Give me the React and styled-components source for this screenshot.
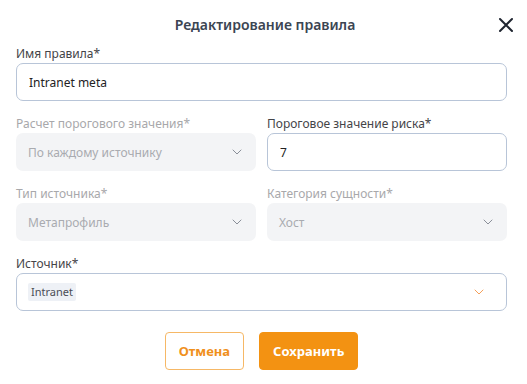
import React from "react";
import styled, { createGlobalStyle } from "styled-components";

const GlobalStyle = createGlobalStyle`
    body {
        margin: 0;
        background: #ffffff;
        font-family: "Noto Sans", "Open Sans", sans-serif;
    }
`;

const ChevronIcon = ({ color = "#8a8f99" }) => (
    <svg width="10" height="6" viewBox="0 0 10 6" fill="none">
        <path d="M1 1l4 4 4-4" stroke={color} strokeWidth="1" strokeLinecap="round" strokeLinejoin="round" />
    </svg>
);

const CloseIcon = () => (
    <svg width="16" height="16" viewBox="0 0 16 16" fill="none">
        <path d="M2 2l12 12M14 2L2 14" stroke="#1f2530" strokeWidth="2" strokeLinecap="round" />
    </svg>
);

const Field = ({ label, disabled, children }) => (
    <StyledField>
        <Label $disabled={disabled}>{label}</Label>
        {children}
    </StyledField>
);

const Select = ({ value, disabled, chevron }) => (
    <SelectBox $disabled={disabled}>
        {value}
        <ChevronIcon color={chevron} />
    </SelectBox>
);

const App = () => {
    return (
        <>
            <GlobalStyle />
            <StyledModal>
                <Header>
                    <span />
                    <Title>Редактирование правила</Title>
                    <CloseButton>
                        <CloseIcon />
                    </CloseButton>
                </Header>

                <Form>
                    <Field label="Имя правила*">
                        <Input defaultValue="Intranet meta" />
                    </Field>

                    <Row>
                        <Field label="Расчет порогового значения*" disabled>
                            <Select value="По каждому источнику" disabled />
                        </Field>
                        <Field label="Пороговое значение риска*">
                            <Input defaultValue="7" />
                        </Field>
                    </Row>

                    <Row>
                        <Field label="Тип источника*" disabled>
                            <Select value="Метапрофиль" disabled />
                        </Field>
                        <Field label="Категория сущности*" disabled>
                            <Select value="Хост" disabled />
                        </Field>
                    </Row>

                    <Field label="Источник*">
                        <MultiSelect>
                            <Tag>Intranet</Tag>
                            <ChevronIcon color="#f5a05a" />
                        </MultiSelect>
                    </Field>
                </Form>

                <Actions>
                    <Button $variant="outline">Отмена</Button>
                    <Button>Сохранить</Button>
                </Actions>
            </StyledModal>
        </>
    );
};

const StyledModal = styled.div`
    width: 527px;
    height: 384px;
    box-sizing: border-box;
    padding: 16px 20px 0 16px;
    background: #ffffff;
`;

const Header = styled.div`
    display: grid;
    grid-template-columns: 1fr auto 1fr;
    align-items: center;
    height: 18px;
    margin: 0 -7px 11px 0;
`;

const Title = styled.h2`
    margin: 0;
    font-size: 14px;
    line-height: 18px;
    font-weight: 600;
    color: #3b4552;
`;

const CloseButton = styled.button`
    justify-self: end;
    padding: 0;
    border: none;
    background: none;
    display: flex;
`;

const Form = styled.div`
    display: flex;
    flex-direction: column;
    gap: 14px;
`;

const Row = styled.div`
    display: grid;
    grid-template-columns: 1fr 1fr;
    gap: 11px;
`;

const StyledField = styled.div`
    display: flex;
    flex-direction: column;
`;

const Label = styled.label`
    font-size: 12px;
    line-height: 18px;
    color: ${({ $disabled }) => ($disabled ? "#a8a8ab" : "#444448")};
`;

const Input = styled.input`
    box-sizing: border-box;
    height: 38px;
    width: 100%;
    padding: 0 12px;
    border: 1px solid #b8c5d8;
    border-radius: 7px;
    font-family: inherit;
    font-size: 12px;
    color: #222;
    outline: none;
`;

const SelectBox = styled.div`
    box-sizing: border-box;
    height: 38px;
    display: flex;
    align-items: center;
    justify-content: space-between;
    padding: 0 14px 0 12px;
    border-radius: 7px;
    background: ${({ $disabled }) => ($disabled ? "#f3f4f6" : "#fff")};
    color: ${({ $disabled }) => ($disabled ? "#a9abb0" : "#222")};
    font-size: 12px;
`;

const MultiSelect = styled.div`
    box-sizing: border-box;
    height: 38px;
    display: flex;
    align-items: center;
    justify-content: space-between;
    padding: 0 22px 0 11px;
    border: 1px solid #b8c5d8;
    border-radius: 7px;
`;

const Tag = styled.span`
    background: #eef1f6;
    border-radius: 2px;
    padding: 2px 3px;
    font-size: 11px;
    line-height: 14px;
    color: #4a4d55;
`;

const Actions = styled.div`
    display: flex;
    justify-content: center;
    gap: 15px;
    margin-top: 21px;
`;

const Button = styled.button`
    box-sizing: border-box;
    height: 38px;
    padding: 0 13px;
    border-radius: 4px;
    font-family: inherit;
    font-size: 13px;
    font-weight: 700;
    border: 1px solid;
    background: ${({ $variant }) => ($variant === "outline" ? "#fff" : "#f39212")};
    color: ${({ $variant }) => ($variant === "outline" ? "#f0901c" : "#fff")};
    border-color: ${({ $variant }) => ($variant === "outline" ? "#f6b866" : "#f39212")};
`;

export default App;
